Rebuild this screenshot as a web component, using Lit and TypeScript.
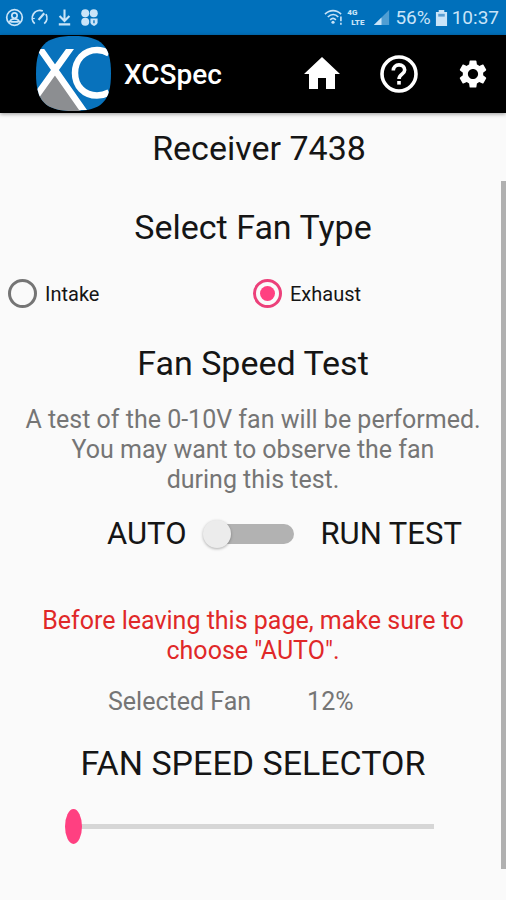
import { LitElement, html, css, svg } from "lit";
import { customElement, state } from "lit/decorators.js";

const icons = {
  account: svg`<g fill="none" stroke="currentColor" stroke-width="1.8"><circle cx="10" cy="10" r="8.2"/><circle cx="10" cy="8" r="2.8"/><path d="M4.5 15.5c1-3 2.800-4 5.500-4s4.500 1 5.500 4M6 14.500h8"/></g>`,
  gauge: svg`<g fill="none" stroke="currentColor" stroke-width="1.900"><path d="M5 16.500A8 8 0 0 1 13.500 3.200M16.800 6.500A8 8 0 0 1 15 16.500"/><path d="M3 11h2" stroke-width="1.200"/><path d="M9 12.500L15 5.500" stroke-width="2.400"/></g>`,
  download: svg`<path d="M10 1.500v12M4.800 8.500l5.200 5.200 5.200-5.200M4 17.200h12" fill="none" stroke="currentColor" stroke-width="2.200"/>`,
  apps: svg`<g fill="currentColor"><circle cx="5.500" cy="5.500" r="4.200"/><circle cx="14.500" cy="5.500" r="4.200"/><circle cx="5.500" cy="14.500" r="4.200"/><path d="M11 11h7.500v4c0 2-1.700 3-3.700 4-2-1-3.800-2-3.800-4z"/></g><path d="M14.700 13v3" stroke="#0070bb" stroke-width="1.400"/>`,
  wifi: svg`<g fill="none" stroke="currentColor" stroke-width="1.700"><path d="M1 6.500C6 1.500 13 1.500 18 6.500M4 9.500c3.500-3.500 8-3.500 11 0M6.500 12.500c2-2 4-2 6 0"/><path d="M17.800 9v5M17.800 15.500v2"/></g><circle cx="9.500" cy="15" r="1.700" fill="currentColor"/>`,
  signal: svg`<path d="M18 2v16H2z" fill="currentColor" opacity=".4"/><path d="M10 10v8H2z" fill="currentColor"/>`,
  battery: svg`<path d="M4 1h6v2h3v15H1V3h3z" fill="currentColor"/><path d="M3.500 5h7v3h-7z" fill="#5a9fd2"/>`,
  home: svg`<path d="M20 3L2 20h5v15h9V24h8v11h9V20h5z" fill="currentColor"/>`,
  help: svg`<circle cx="20" cy="20" r="17" fill="none" stroke="currentColor" stroke-width="3.600"/><path d="M14.300 16.500c0-3.300 2.400-5.600 5.700-5.600s5.700 2.200 5.700 5.200c0 4-5.700 4.300-5.700 9" fill="none" stroke="currentColor" stroke-width="3.600"/><path d="M18.200 27h3.600v3.600h-3.600z" fill="currentColor"/>`,
  gear: svg`<path fill="currentColor" d="M19.140 12.940c.04-.3.06-.61.06-.94 0-.32-.02-.64-.07-.94l2.030-1.580c.18-.14.23-.41.12-.61l-1.920-3.320c-.12-.22-.37-.29-.59-.22l-2.390.96c-.5-.38-1.030-.7-1.620-.94l-.36-2.540c-.04-.24-.24-.41-.48-.41h-3.840c-.24 0-.43.17-.47.41l-.36 2.540c-.59.24-1.130.57-1.620.94l-2.390-.96c-.22-.08-.47 0-.59.22L2.740 8.870c-.12.21-.08.47.12.61l2.030 1.580c-.05.3-.09.63-.09.94s.02.64.07.94l-2.030 1.580c-.18.14-.23.41-.12.61l1.920 3.320c.12.22.37.29.59.22l2.390-.96c.5.38 1.030.7 1.620.94l.36 2.540c.05.24.24.41.48.41h3.840c.24 0 .44-.17.47-.41l.36-2.540c.59-.24 1.130-.56 1.620-.94l2.390.96c.22.08.47 0 .59-.22l1.920-3.320c.12-.22.07-.47-.12-.61l-2.010-1.580zM12 15.600c-1.980 0-3.600-1.620-3.600-3.600s1.620-3.600 3.600-3.600 3.600 1.620 3.600 3.600-1.620 3.600-3.600 3.600z"/>`,
};

@customElement("status-bar")
class StatusBar extends LitElement {
  static styles = css`
    :host { display: flex; align-items: center; justify-content: space-between; height: 35px; box-sizing: border-box; padding: 0 7px 0 5px; background: #0070bb; color: #c9e4f8; }
    .group { display: flex; align-items: center; gap: 6px; }
    .status { gap: 4px; }
    .text { font-size: 19px; line-height: 24px; }
    .glyph { display: block; width: 19px; height: 19px; }
    .battery { display: block; width: 13px; height: 18px; }
    .net { display: flex; flex-direction: column; padding-right: 4px; font-size: 8px; font-weight: 900; line-height: 10px; }
    .lte { padding-left: 4px; }
  `;
  render() {
    const glyph = (icon: unknown) => html`<svg class="glyph" viewBox="0 0 20 20" aria-hidden="true">${icon}</svg>`;
    return html`
      <div class="group">${glyph(icons.account)}${glyph(icons.gauge)}${glyph(icons.download)}${glyph(icons.apps)}</div>
      <div class="group status">
        ${glyph(icons.wifi)}
        <span class="net"><span>4G</span><span class="lte">LTE</span></span>
        ${glyph(icons.signal)}
        <span class="text">56%</span>
        <svg class="battery" viewBox="0 0 14 19" aria-hidden="true">${icons.battery}</svg>
        <span class="text">10:37</span>
      </div>`;
  }
}

@customElement("app-bar")
class AppBar extends LitElement {
  static styles = css`
    :host { display: flex; align-items: center; height: 78px; box-sizing: border-box; padding: 0 16px 0 35px; background: #000; color: #fff; box-shadow: 0 1px 4px rgba(0, 0, 0, 0.4); position: relative; }
    .logo { display: block; width: 76px; height: 76px; }
    .name { margin: 0; padding: 2px 0 0 13px; font-size: 28px; line-height: 36px; font-weight: 500; }
    nav { display: flex; align-items: center; gap: 37px; margin-left: auto; }
    button { display: block; border: 0; padding: 0; background: none; color: inherit; cursor: pointer; }
    .icon { display: block; width: 40px; height: 40px; }
    .gear { display: block; width: 34px; height: 34px; }
  `;
  render() {
    return html`
      <svg class="logo" viewBox="-1 0 76 76" role="img" aria-label="XC logo">
        <defs>
          <clipPath id="tile"><path d="M37.500 0C66 0 75 10 75 37.500S66 75 37.500 75 0 65 0 37.500 9 0 37.500 0z"/></clipPath>
          <clipPath id="arms"><path d="M-2 13h80v61H-2z"/></clipPath>
        </defs>
        <g clip-path="url(#tile)">
          <rect width="76" height="76" fill="#0872bc"/>
          <path d="M19 36L-6 69v9h53z" fill="#8c8e91"/>
          <g clip-path="url(#arms)"><path d="M39 6L-4 66M-1 5.500l54 77" fill="none" stroke="#fff" stroke-width="6.500"/></g>
          <path d="M73 17.500C69 15 65 14 61 14c-13 0-22 10-22 23s9 22.500 22 22.500c4 0 8-1 12-3" fill="none" stroke="#fff" stroke-width="6.500"/>
        </g>
      </svg>
      <h1 class="name">XCSpec</h1>
      <nav>
        <button aria-label="Home"><svg class="icon" viewBox="0 0 40 40">${icons.home}</svg></button>
        <button aria-label="Help"><svg class="icon" viewBox="0 0 40 40">${icons.help}</svg></button>
        <button aria-label="Settings"><svg class="gear" viewBox="0 0 24 24">${icons.gear}</svg></button>
      </nav>`;
  }
}

@customElement("app-root")
class AppRoot extends LitElement {
  @state() private fan = "exhaust";

  static styles = css`
    :host { display: flex; flex-direction: column; min-height: 100vh; background: #fafafa; color: #151515; font-family: Roboto, "Noto Sans", sans-serif; }
    main { flex: 1; position: relative; padding: 15px 0 32px; }
    h2 { margin: 0; font-size: 34px; line-height: 40px; font-weight: 400; text-align: center; }
    .receiver { padding-left: 12px; }
    .type { margin-top: 39px; }
    .fans { display: grid; grid-template-columns: 245px 1fr; margin: 32px 0 35px; padding: 0 8px; border: 0; }
    .fan { display: flex; align-items: center; gap: 8px; font-size: 20px; line-height: 28px; }
    .fan input { appearance: none; display: grid; place-items: center; box-sizing: border-box; width: 29px; height: 29px; margin: 0; border: 3px solid #757575; border-radius: 50%; }
    .fan input:checked { border-color: #ec407a; }
    .fan input:checked::after { content: ""; width: 15px; height: 15px; border-radius: 50%; background: #ff4081; }
    p { margin: 0; font-size: 25px; line-height: 30px; text-align: center; }
    .note { margin-top: 22px; padding: 0 20px; color: #757575; }
    .mode { display: flex; align-items: center; margin-top: 21px; padding-left: 107px; font-size: 31px; line-height: 36px; }
    .switch { appearance: none; position: relative; width: 92px; height: 30px; margin: 0 26px 0 16px; }
    .switch::before { content: ""; position: absolute; inset: 5px 0 5px 10px; border-radius: 10px; background: #b2b2b2; }
    .switch::after { content: ""; position: absolute; top: 1px; left: 1px; width: 28px; height: 28px; border-radius: 50%; background: #ececec; box-shadow: 0 1px 3px rgba(0, 0, 0, 0.3); }
    .switch:checked::after { left: 63px; background: #ff4081; }
    .warning { margin-top: 54px; padding: 0 30px; color: #e02828; }
    .selected { display: flex; gap: 56px; margin: 21px 0 0; padding-left: 108px; font-size: 25px; line-height: 30px; color: #757575; }
    .selector { margin-top: 26px; }
    .slider { appearance: none; display: block; width: auto; min-width: calc(100% - 137px); height: 36px; margin: 25px 72px 0 65px; background: linear-gradient(#d6d6d6, #d6d6d6) 9px center / calc(100% - 9px) 5px no-repeat; }
    .slider::-webkit-slider-thumb { appearance: none; width: 17px; height: 35px; border-radius: 50%; background: #ff4081; }
    .scrollbar { position: absolute; top: 68px; right: 0; bottom: 31px; width: 5px; background: #b0b0b0; }
  `;

  private radio(value: string, label: string) {
    return html`<label class="fan">
      <input type="radio" name="fan" .value=${value} .checked=${this.fan === value} @change=${() => (this.fan = value)} />${label}
    </label>`;
  }

  render() {
    return html`
      <status-bar></status-bar>
      <app-bar></app-bar>
      <main>
        <h2 class="receiver">Receiver 7438</h2>
        <h2 class="type" id="type">Select Fan Type</h2>
        <fieldset class="fans" aria-labelledby="type">
          ${this.radio("intake", "Intake")}${this.radio("exhaust", "Exhaust")}
        </fieldset>
        <h2>Fan Speed Test</h2>
        <p class="note">A test of the 0-10V fan will be performed.<br />You may want to observe the fan<br />during this test.</p>
        <div class="mode">
          <label for="run">AUTO</label>
          <input class="switch" id="run" type="checkbox" role="switch" />
          <label for="run">RUN TEST</label>
        </div>
        <p class="warning">Before leaving this page, make sure to<br />choose "AUTO".</p>
        <div class="selected"><span>Selected Fan</span><output for="speed">12%</output></div>
        <h2 class="selector"><label for="speed">FAN SPEED SELECTOR</label></h2>
        <input class="slider" id="speed" type="range" min="12" max="100" value="12" />
        <div class="scrollbar" aria-hidden="true"></div>
      </main>`;
  }
}
